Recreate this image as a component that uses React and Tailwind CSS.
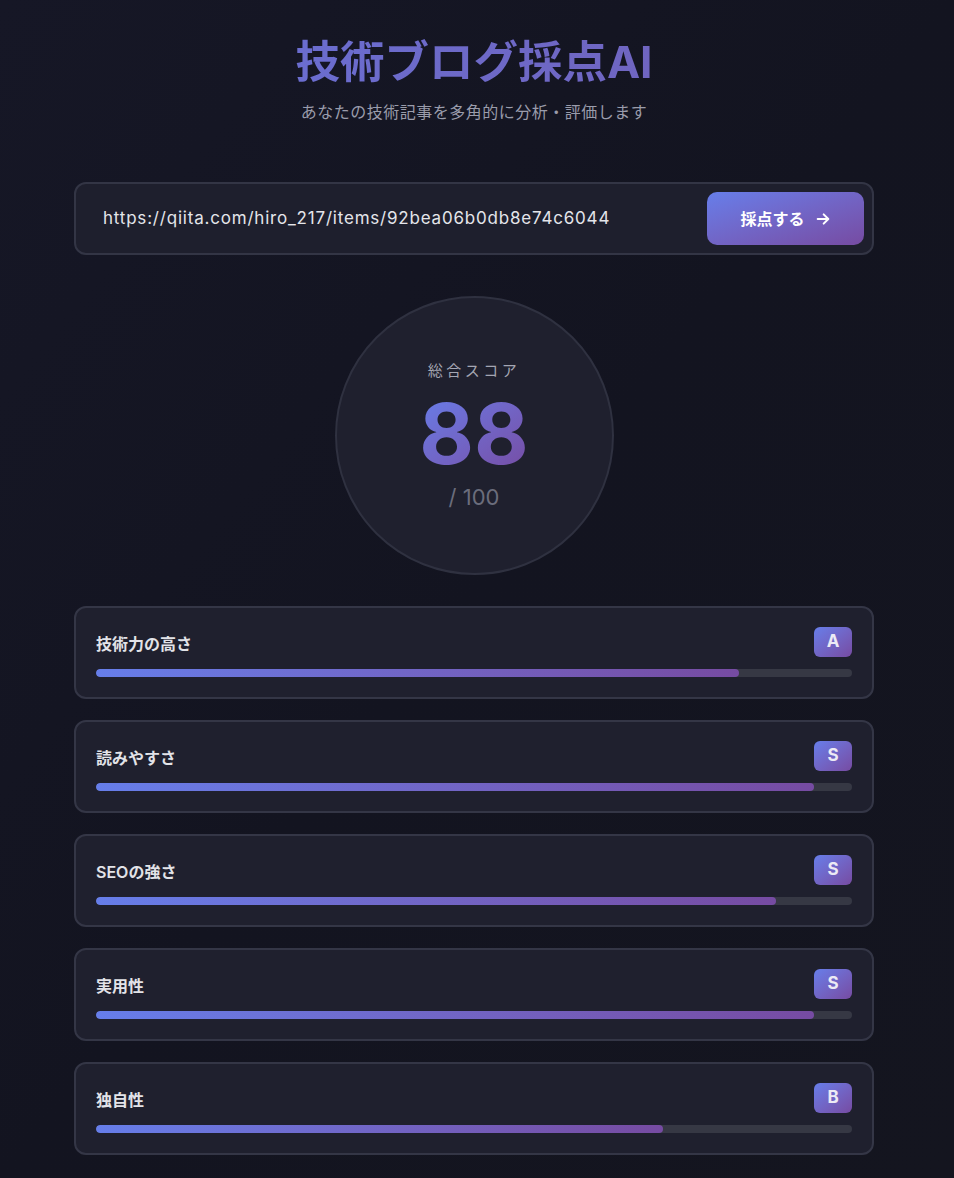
import React from "react";

const scores = [
  { label: "技術力の高さ", grade: "A", value: 85 },
  { label: "読みやすさ", grade: "S", value: 95 },
  { label: "SEOの強さ", grade: "S", value: 90 },
  { label: "実用性", grade: "S", value: 95 },
  { label: "独自性", grade: "B", value: 75 },
];

function ArrowIcon() {
  return (
    <svg width="16" height="16" viewBox="0 0 24 24" fill="none" stroke="currentColor" strokeWidth="3" strokeLinecap="round" strokeLinejoin="round">
      <path d="M4 12h15" />
      <path d="M13 5l7 7-7 7" />
    </svg>
  );
}

export default function App() {
  const font = { fontFamily: '"Inter", "Noto Sans CJK JP", sans-serif' };

  return (
    <div
      className="min-h-[1178px] bg-gradient-to-br from-[#161726] via-[#131420] to-[#14151f] pr-[6px] pt-[34px] pb-[24px]"
      style={font}
    >
      <div className="mx-auto max-w-[800px]">
        {/* HEADER */}
        <div className="text-center">
          <h1 className="bg-gradient-to-r from-[#6772d8] to-[#7260b8] bg-clip-text text-[44.5px] font-bold leading-[56px] text-transparent">
            技術ブログ採点AI
          </h1>
          <p className="mt-[10px] text-[16px] leading-[24px] tracking-[0.5px] text-[#9a9cab]">
            あなたの技術記事を多角的に分析・評価します
          </p>
        </div>

        {/* INPUT */}
        <div className="mt-[58px] flex h-[73px] items-center justify-between rounded-[12px] border-2 border-[#333545] bg-[#1e1f2d] pl-[27px] pr-[8px]">
          <span className="text-[17px] tracking-[0.8px] text-[#e4e5ea]">
            https://qiita.com/hiro_217/items/92bea06b0db8e74c6044
          </span>
          <button className="flex h-[53px] w-[157px] items-center justify-center gap-[10px] rounded-[10px] bg-gradient-to-br from-[#667eea] to-[#764ba2] text-[16px] font-bold text-white">
            採点する
            <ArrowIcon />
          </button>
        </div>

        {/* TOTAL SCORE */}
        <div className="mt-[41px] flex justify-center">
          <div className="flex h-[279px] w-[279px] flex-col items-center justify-center rounded-full border-2 border-[#2f3140] bg-[#1f202e] pt-[2px]">
            <p className="text-[15px] leading-[22px] tracking-[3.5px] text-[#a4a6b3]">総合スコア</p>
            <p className="mt-[10px] bg-gradient-to-br from-[#667eea] to-[#764ba2] bg-clip-text text-[84px] font-bold leading-[84px] text-transparent">
              88
            </p>
            <p className="mt-[5px] text-[22px] leading-[32px] text-[#6b6d7c]">/ 100</p>
          </div>
        </div>

        {/* CATEGORY CARDS */}
        <div className="mt-[31px] flex flex-col gap-[21px]">
          {scores.map((s) => (
            <div
              key={s.label}
              className="rounded-[12px] border-2 border-[#343646] bg-[#1f202e] px-[20px] pt-[19px] pb-[20px]"
            >
              <div className="flex h-[30px] items-center justify-between">
                <span className="pt-[3px] text-[16px] font-semibold text-[#e2e3e8]">{s.label}</span>
                <span className="flex h-[30px] w-[38px] items-center justify-center rounded-[6px] bg-gradient-to-br from-[#667eea] to-[#764ba2] text-[17px] font-bold text-[#eceaf5]">
                  {s.grade}
                </span>
              </div>
              <div className="mt-[12px] h-[8px] w-full overflow-hidden rounded-full bg-[#363844]">
                <div
                  className="h-full rounded-full bg-gradient-to-r from-[#667eea] to-[#764ba2]"
                  style={{ width: `${s.value}%` }}
                />
              </div>
            </div>
          ))}
        </div>
      </div>
    </div>
  );
}
